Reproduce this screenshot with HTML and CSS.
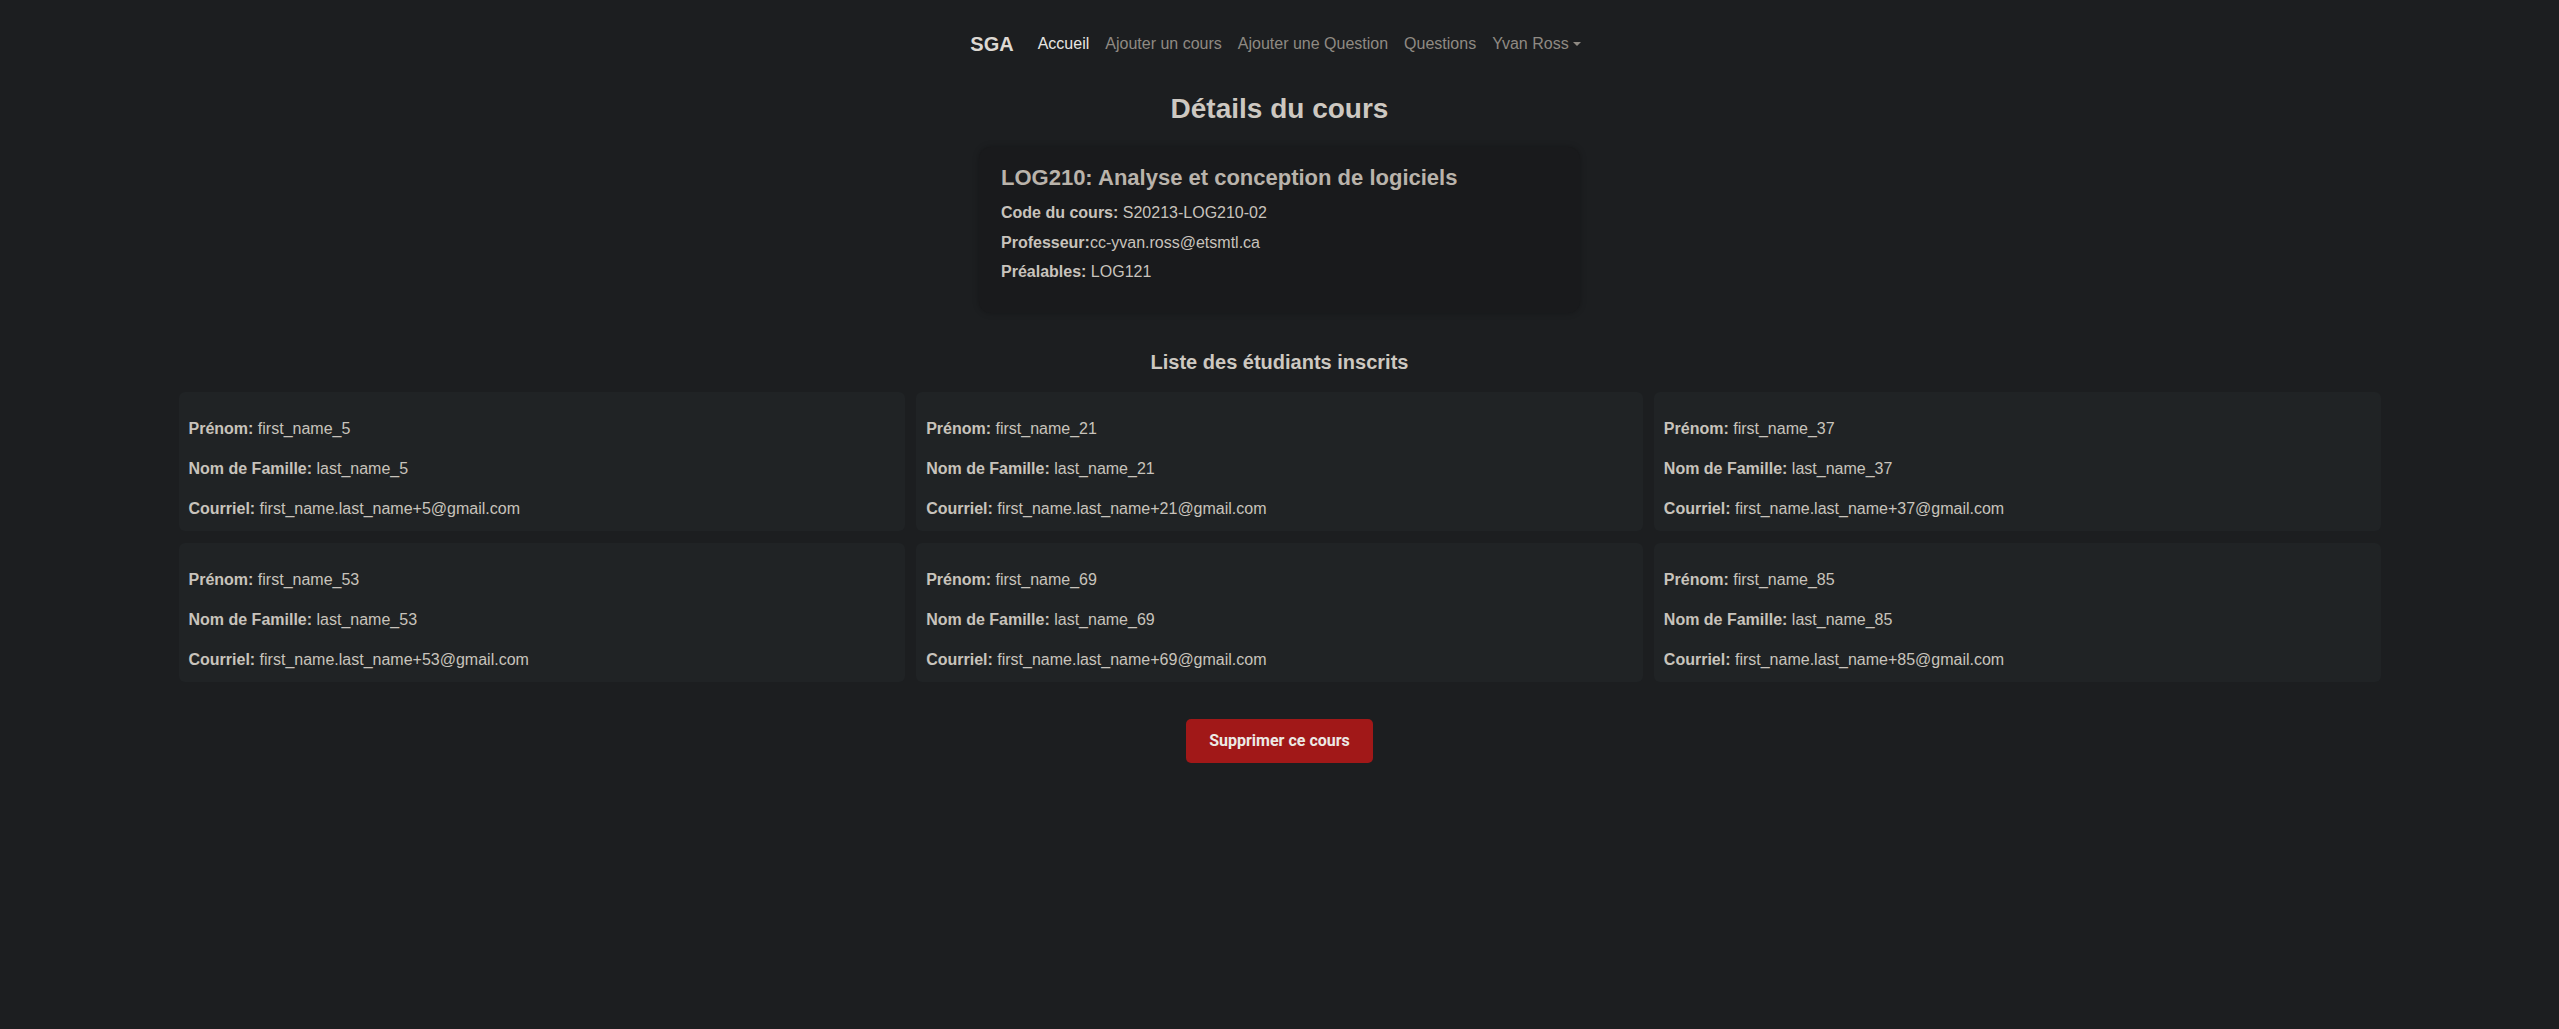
FILE: index.html
```html
<!DOCTYPE html>
<html lang="fr">
<head>
<meta charset="utf-8">
<title>SGA - Détails du cours</title>
<link rel="stylesheet" href="styles.css">
</head>
<body>
<nav class="navbar">
  <a class="brand" href="#">SGA</a>
  <ul class="nav">
    <li><a class="nav-link active" href="#">Accueil</a></li>
    <li><a class="nav-link" href="#">Ajouter un cours</a></li>
    <li><a class="nav-link" href="#">Ajouter une Question</a></li>
    <li><a class="nav-link" href="#">Questions</a></li>
    <li><a class="nav-link dropdown" href="#">Yvan Ross<span class="caret"></span></a></li>
  </ul>
</nav>

<main class="page">
  <h3 class="page-title">Détails du cours</h3>

  <section class="course-card">
    <h4 class="course-title">LOG210: Analyse et conception de logiciels</h4>
    <p class="course-line"><b>Code du cours:</b> S20213-LOG210-02</p>
    <p class="course-line"><b>Professeur:</b>cc-yvan.ross@etsmtl.ca</p>
    <p class="course-line"><b>Préalables:</b> LOG121</p>
  </section>

  <h5 class="list-title">Liste des étudiants inscrits</h5>

  <div class="students">
    <div class="student">
      <p><b>Prénom:</b> first_name_5</p>
      <p><b>Nom de Famille:</b> last_name_5</p>
      <p><b>Courriel:</b> first_name.last_name+5@gmail.com</p>
    </div>
    <div class="student">
      <p><b>Prénom:</b> first_name_21</p>
      <p><b>Nom de Famille:</b> last_name_21</p>
      <p><b>Courriel:</b> first_name.last_name+21@gmail.com</p>
    </div>
    <div class="student">
      <p><b>Prénom:</b> first_name_37</p>
      <p><b>Nom de Famille:</b> last_name_37</p>
      <p><b>Courriel:</b> first_name.last_name+37@gmail.com</p>
    </div>
    <div class="student">
      <p><b>Prénom:</b> first_name_53</p>
      <p><b>Nom de Famille:</b> last_name_53</p>
      <p><b>Courriel:</b> first_name.last_name+53@gmail.com</p>
    </div>
    <div class="student">
      <p><b>Prénom:</b> first_name_69</p>
      <p><b>Nom de Famille:</b> last_name_69</p>
      <p><b>Courriel:</b> first_name.last_name+69@gmail.com</p>
    </div>
    <div class="student">
      <p><b>Prénom:</b> first_name_85</p>
      <p><b>Nom de Famille:</b> last_name_85</p>
      <p><b>Courriel:</b> first_name.last_name+85@gmail.com</p>
    </div>
  </div>

  <div class="actions">
    <button class="btn-danger" type="button">Supprimer ce cours</button>
  </div>
</main>
</body>
</html>
```

FILE: styles.css
```css
* { box-sizing: border-box; }

html, body {
  margin: 0;
  padding: 0;
  background: #1c1e20;
  color: #c8c3bc;
  font-family: "Liberation Sans", Arial, sans-serif;
  font-size: 16px;
  line-height: 1.5;
}

a { text-decoration: none; }

.navbar {
  display: flex;
  justify-content: center;
  align-items: center;
  padding: 24px 0 8px;
}

.brand {
  font-size: 20px;
  line-height: 30px;
  font-weight: 700;
  color: #dcd8d2;
  padding: 5px 0;
  margin-right: 16px;
}

.nav {
  display: flex;
  list-style: none;
  margin: 0;
  padding: 0;
}

.nav-link {
  display: block;
  padding: 8px;
  line-height: 24px;
  color: #8f8a83;
}

.nav-link.active { color: #e8e6e3; }

.caret {
  display: inline-block;
  margin-left: 4px;
  vertical-align: 3px;
  border-top: 4.8px solid #8f8a83;
  border-left: 4px solid transparent;
  border-right: 4px solid transparent;
}

.page {
  display: flex;
  flex-direction: column;
  align-items: center;
}

.page-title {
  margin: 20px 0 21px;
  font-size: 28px;
  line-height: 33.6px;
  font-weight: 700;
  color: #cdc8c1;
}

.course-card {
  width: 601px;
  background: #191a1c;
  border-radius: 12px;
  box-shadow: 0 0 6px rgba(0, 0, 0, 0.25);
  padding: 18px 22px 29px;
}

.course-title {
  margin: 0 0 10px;
  font-size: 22px;
  line-height: 26.4px;
  font-weight: 700;
  color: #b9b3ab;
}

.course-line {
  margin: 0 0 5.5px;
  font-size: 16px;
  line-height: 24px;
}
.course-line:last-child { margin-bottom: 0; }

.list-title {
  margin: 37px 0 18px;
  font-size: 20px;
  line-height: 24px;
  font-weight: 700;
  color: #cdc8c1;
}

.students {
  width: 2202px;
  display: grid;
  grid-template-columns: repeat(3, 1fr);
  gap: 12px 11px;
}

.student {
  background: #202325;
  border-radius: 6px;
  padding: 25px 10px 10px;
}

.student p {
  margin: 0 0 16px;
  line-height: 24px;
}
.student p:last-child { margin-bottom: 0; }

.actions {
  margin-top: 37px;
}

.btn-danger {
  font-family: Roboto, "Liberation Sans", sans-serif;
  font-size: 16px;
  font-weight: 700;
  line-height: 24px;
  padding: 10px 23px;
  color: #ece9e5;
  background: #a11818;
  border: none;
  border-radius: 5px;
}
```
